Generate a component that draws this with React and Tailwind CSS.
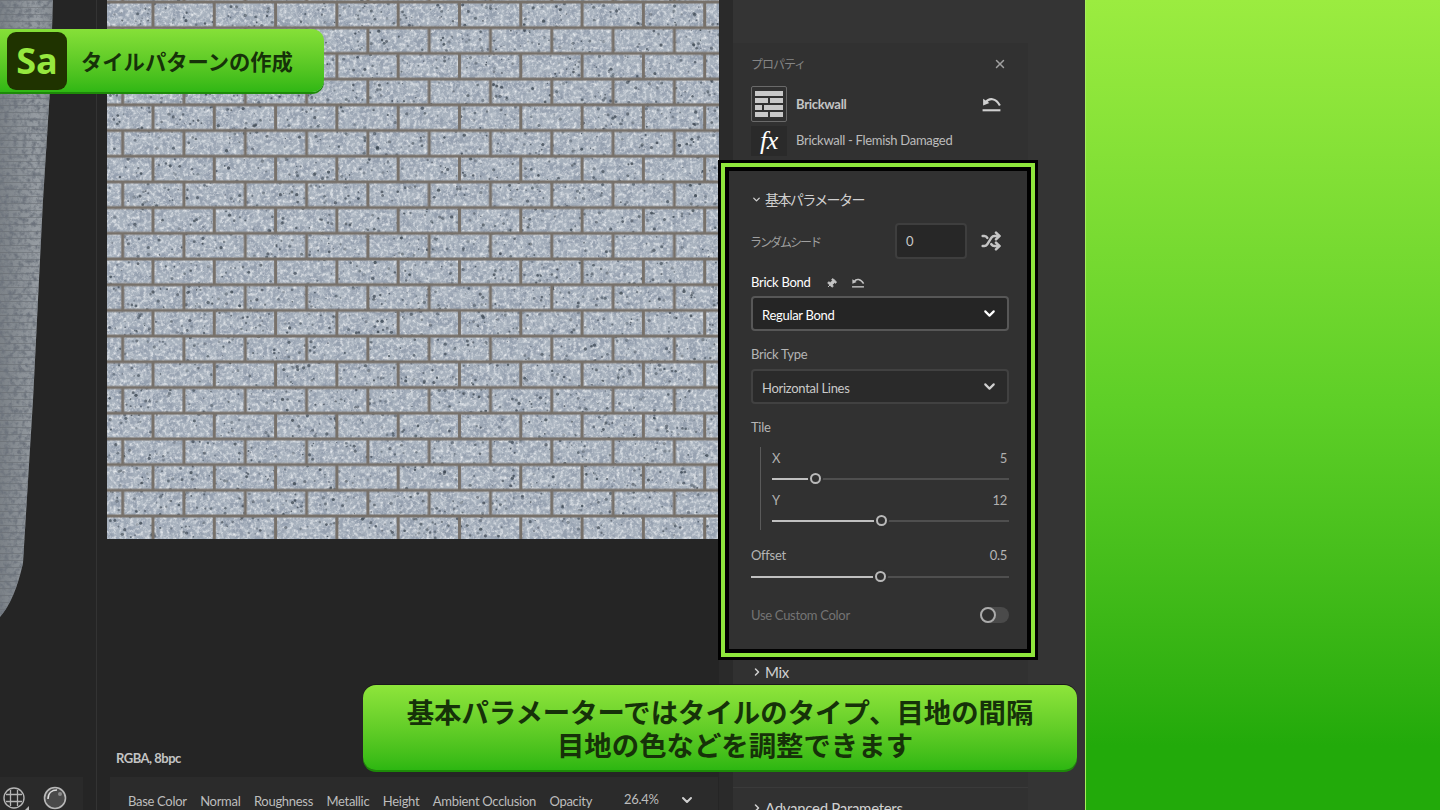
import React from 'react';
import { X, ChevronDown, ChevronRight, Shuffle, Pin } from 'lucide-react';

const jp = "font-['Noto_Sans_CJK_JP','Noto_Sans',sans-serif]";

// speckles on the brick texture, seeded so every run looks the same
const makeSpeckles = () => {
  let seed = 7;
  const rnd = () => {
    seed = (seed * 16807) % 2147483647;
    return seed / 2147483647;
  };
  const dots = [];
  for (let i = 0; i < 3400; i++) {
    dots.push({ x: rnd() * 612, y: rnd() * 539, r: 0.5 + rnd() * 1.2, o: 0.3 + rnd() * 0.5 });
  }
  return dots;
};
const speckles = makeSpeckles();

const BrickTexture = () => (
  <svg width="612" height="539" className="block">
    <defs>
      <filter id="grain" x="0" y="0" width="100%" height="100%">
        <feTurbulence type="fractalNoise" baseFrequency="0.3" numOctaves="3" seed="4" />
        <feColorMatrix type="matrix" values="0 0 0 0 0.88  0 0 0 0 0.9  0 0 0 0 0.92  1.9 0 0 0 -0.82" />
      </filter>
      <filter id="patches" x="0" y="0" width="100%" height="100%">
        <feTurbulence type="fractalNoise" baseFrequency="0.11" numOctaves="3" seed="11" />
        <feColorMatrix type="matrix" values="0 0 0 0 0.3  0 0 0 0 0.35  0 0 0 0 0.43  3.6 0 0 0 -1.45" />
      </filter>
      <filter id="soft" x="0" y="0" width="100%" height="100%">
        <feGaussianBlur stdDeviation="0.7" />
      </filter>
      <pattern id="mortar" patternUnits="userSpaceOnUse" x="0" y="2" width="61.3" height="51.4">
        <rect x="0" y="-1.5" width="61.3" height="3" fill="#77716b" />
        <rect x="0" y="24.2" width="61.3" height="3" fill="#77716b" />
        <rect x="0" y="49.9" width="61.3" height="3" fill="#77716b" />
        <rect x="44.5" y="0" width="3" height="25.7" fill="#77716b" />
        <rect x="14.2" y="25.7" width="3" height="25.7" fill="#77716b" />
      </pattern>
    </defs>
    <g filter="url(#soft)">
      <rect width="612" height="539" fill="#a8b2be" />
      <rect width="612" height="539" filter="url(#patches)" />
      <rect width="612" height="539" filter="url(#grain)" />
      {speckles.map((d, i) => (
        <circle key={i} cx={d.x} cy={d.y} r={d.r} fill="#39444f" opacity={d.o} />
      ))}
      <rect width="612" height="539" fill="url(#mortar)" />
    </g>
  </svg>
);

const ViewportObject = () => (
  <svg width="97" height="640" className="absolute left-0 top-0">
    <defs>
      <filter id="stone" x="0" y="0" width="100%" height="100%">
        <feTurbulence type="fractalNoise" baseFrequency="0.22" numOctaves="3" seed="3" />
        <feColorMatrix type="matrix" values="0 0 0 0 0.15  0 0 0 0 0.17  0 0 0 0 0.2  2.6 0 0 0 -1.05" />
        <feComposite in2="SourceGraphic" operator="in" />
      </filter>
      <linearGradient id="objShade" x1="0" y1="0" x2="1" y2="0">
        <stop offset="0" stopColor="#7b8187" />
        <stop offset="0.7" stopColor="#969ca2" />
        <stop offset="1" stopColor="#868c92" />
      </linearGradient>
      <pattern id="objLines" patternUnits="userSpaceOnUse" width="54" height="7">
        <rect y="0" width="54" height="1" fill="#5f6469" opacity="0.45" />
      </pattern>
    </defs>
    <path d="M0 0 L53 0 L50 90 L43 200 L33 400 L25 530 L23 563 Q15 600 0 617 Z" fill="url(#objShade)" />
    <path d="M0 0 L53 0 L50 90 L43 200 L33 400 L25 530 L23 563 Q15 600 0 617 Z" fill="url(#objLines)" />
    <path d="M0 0 L53 0 L50 90 L43 200 L33 400 L25 530 L23 563 Q15 600 0 617 Z" fill="#000" filter="url(#stone)" />
  </svg>
);

const UndoIcon = ({ size = 20 }) => (
  <svg width={size} height={size} viewBox="0 0 20 20" fill="none" stroke="currentColor" strokeWidth="2">
    <path d="M2 11 L2 4.5 L8 8.5 Z" fill="currentColor" stroke="none" />
    <path d="M4.5 8 C7.5 3.5 14 3.5 18 11" />
    <path d="M1.5 15.5 H18.5" />
  </svg>
);

const BrickIcon = () => (
  <svg width="30" height="28" viewBox="0 0 30 28" fill="#c9c9c9">
    <rect x="1" y="1" width="28" height="5" />
    <rect x="1" y="8" width="13" height="5" />
    <rect x="16" y="8" width="13" height="5" />
    <rect x="1" y="15" width="7" height="5" />
    <rect x="10" y="15" width="19" height="5" />
    <rect x="1" y="22" width="13" height="5" />
    <rect x="16" y="22" width="13" height="5" />
  </svg>
);

const SelectBox = ({ label, strong }) => (
  <div className={`h-[35px] rounded-[4px] border-2 ${strong ? 'bg-[#252525] border-[#575757] text-white' : 'bg-[#2a2a2a] border-[#414141] text-[#c9c9c9]'} flex items-center justify-between pl-[9px] pr-[9px]`}>
    <span className="text-[13px] relative top-[2px]">{label}</span>
    <ChevronDown size={17} strokeWidth={3} className={strong ? 'text-white' : 'text-[#d0d0d0]'} />
  </div>
);

const Slider = ({ width, pct }) => (
  <div className="relative h-[12px]" style={{ width }}>
    <div className="absolute left-0 right-0 top-[5px] h-[2px] bg-[#4f4f4f]" />
    <div className="absolute left-0 top-[5px] h-[2px] bg-[#c0c0c0]" style={{ width: pct - 7 }} />
    <div className="absolute top-[0px] w-[11px] h-[11px] rounded-full border-2 border-[#b9b9b9] bg-[#303030] shadow-[0_0_0_2px_#313131]" style={{ left: pct - 5 }} />
  </div>
);

export default function App() {
  return (
    <div className="w-[1440px] h-[810px] overflow-hidden relative flex bg-[#262626] text-[#c9c9c9] tracking-[-0.3px] font-['Lato','Noto_Sans_CJK_JP',sans-serif]">
      {/* 3D view */}
      <div className="w-[97px] h-full relative shrink-0 bg-[#252525] border-r border-[#333333] flex flex-col justify-end">
        <ViewportObject />
        <div className="w-[83px] h-[33px] bg-[#2a2a2a] relative">
          <svg width="84" height="33" viewBox="0 0 84 33" fill="none" className="absolute left-0 top-0">
            <circle cx="14" cy="21" r="10" stroke="#b5b5b5" strokeWidth="1.4" />
            <path d="M10.5 13 V29 M17.5 13 V29 M6 17.5 H22 M6 24.5 H22" stroke="#b5b5b5" strokeWidth="1.3" />
            <path d="M29 33 L29 29 L25 33 Z" fill="#b5b5b5" />
            <circle cx="55" cy="21" r="10.5" fill="#4a4a4a" stroke="#b8b8b8" strokeWidth="1.6" />
            <path d="M48 22 C48 16 52 13 57 13" stroke="#dcdcdc" strokeWidth="1.6" />
            <circle cx="60" cy="17" r="2" fill="#8c8c8c" />
          </svg>
        </div>
      </div>

      {/* 2D view */}
      <div className="w-[622px] h-full shrink-0 flex flex-col bg-[#252525]">
        <div className="pl-[10px] h-[539px] shrink-0">
          <BrickTexture />
        </div>
        <div className="flex-1 flex items-end pl-[19px] pb-[9px]">
          <span className="text-[13px] font-bold text-[#c4c4c4] tracking-[-0.5px]">RGBA, 8bpc</span>
        </div>
        <div className="ml-[13px] w-[608px] h-[33px] shrink-0 bg-[#2b2b2b] flex items-start pt-[17px] text-[13px] leading-[14px] text-[#bdbdbd]">
          <div className="flex pl-[18px] gap-[13.5px] whitespace-nowrap">
            <span>Base Color</span>
            <span>Normal</span>
            <span>Roughness</span>
            <span>Metallic</span>
            <span>Height</span>
            <span>Ambient Occlusion</span>
            <span>Opacity</span>
          </div>
          <span className="ml-[32px] -mt-[2px]">26.4%</span>
          <ChevronDown size={16} strokeWidth={3} className="ml-[20px] -mt-[2px] text-[#d0d0d0]" />
        </div>
      </div>

      {/* Properties dock */}
      <div className="flex-1 h-full pl-[14px] bg-[#2a2a2a] shrink-0 w-[366px] max-w-[366px]">
        <div className="w-[352px] h-full bg-[#343434] pt-[43px]">
          <div className="w-[295px] h-[117px] pl-[18px] pr-[21px] bg-[#313131]">
            <div className="flex items-center justify-between h-[42px] text-[12px] text-[#858585]">
              <span className={`${jp} tracking-[-1px]`}>プロパティ</span>
              <X size={14} strokeWidth={2.5} className="text-[#a0a0a0]" />
            </div>
            <div className="flex items-center h-[36px] mt-[1px]">
              <div className="w-[36px] h-[36px] rounded-[2px] border border-[#6a6a6a] flex items-center justify-center">
                <BrickIcon />
              </div>
              <span className="ml-[9px] text-[13px] font-bold text-[#c4c4c4] relative top-[1px]">Brickwall</span>
              <span className="ml-auto mr-[5px] text-[#d0d0d0]"><UndoIcon size={21} /></span>
            </div>
            <div className="flex items-center h-[30px] mt-[4px]">
              <div className="w-[36px] h-[30px] bg-[#2a2a2a] flex items-center justify-center font-['Liberation_Serif',serif] italic text-[26px] leading-none text-white">fx</div>
              <span className="ml-[9px] text-[13px] text-[#bcbcbc]">Brickwall - Flemish Damaged</span>
            </div>
          </div>

          {/* highlighted parameter group */}
          <div className="-ml-[15px] w-[320px] h-[500px] border-[3px] border-black relative">
            <div className="w-full h-full border-[4px] border-[#8fe63c]">
              <div className="w-full h-full border-[4px] border-black bg-[#313131] pl-[22px] pr-[18px]">
                <div className={`flex items-center mt-[18px] h-[20px] text-[14px] tracking-[-1.6px] text-[#d0d0d0] ${jp}`}>
                  <ChevronDown size={11} strokeWidth={3} className="mr-[3px]" />
                  基本パラメーター
                </div>
                <div className="flex items-center mt-[14px] h-[36px]">
                  <span className={`w-[144px] text-[12px] tracking-[-2px] text-[#a0a0a0] -ml-[1px] mr-[1px] relative top-[1px] ${jp}`}>ランダムシード</span>
                  <div className="w-[72px] h-[36px] bg-[#272727] border-2 border-[#3e3e3e] rounded-[4px] flex items-center pl-[9px] pt-[2px] text-[13px] text-[#c9c9c9]">0</div>
                  <Shuffle size={20} strokeWidth={3} className="ml-[14px] text-[#c4c4c4]" />
                </div>
                <div className="flex items-center mt-[14px] h-[18px] pt-[2px] text-[13px] text-white">
                  <span>Brick Bond</span>
                  <Pin size={11} fill="currentColor" className="ml-[16px] rotate-45 text-[#c4c4c4]" />
                  <span className="ml-[14px] text-[#c4c4c4]"><UndoIcon size={14} /></span>
                </div>
                <div className="mt-[5px]"><SelectBox label="Regular Bond" strong /></div>
                <div className="mt-[14px] h-[18px] pt-[2px] flex items-center text-[13px] text-[#b5b5b5]">Brick Type</div>
                <div className="mt-[6px]"><SelectBox label="Horizontal Lines" /></div>
                <div className="mt-[14px] h-[18px] pt-[2px] flex items-center text-[13px] text-[#b5b5b5]">Tile</div>
                <div className="mt-[11px] ml-[9px] border-l border-[#5a5a5a] pl-[11px] h-[83px] w-[249px]">
                  <div className="flex justify-between h-[26px] leading-[22px] text-[13px] text-[#b0b0b0] pr-[2px]"><span>X</span><span>5</span></div>
                  <Slider width={237} pct={43} />
                  <div className="flex justify-between h-[26px] mt-[4px] leading-[22px] text-[13px] text-[#b0b0b0] pr-[2px]"><span>Y</span><span>12</span></div>
                  <Slider width={237} pct={109} />
                </div>
                <div className="mt-[14px] flex justify-between h-[22px] pt-[2px] items-center text-[13px] text-[#b5b5b5] pr-[2px]"><span>Offset</span><span>0.5</span></div>
                <div className="mt-[5px]"><Slider width={258} pct={129} /></div>
                <div className="mt-[22px] flex justify-between items-center h-[20px]">
                  <span className="text-[13px] text-[#747474] relative top-[1px]">Use Custom Color</span>
                  <div className="w-[29px] h-[16px] rounded-full bg-[#4a4a4a] relative">
                    <div className="absolute left-0 top-0 w-[16px] h-[16px] rounded-full border-2 border-[#ababab] bg-[#303030]" />
                  </div>
                </div>
              </div>
            </div>
          </div>

          <div className="w-[295px] h-[150px] bg-[#313131] pl-[18px] pt-[1px]">
            <div className="flex items-center h-[22px] text-[15px] text-[#d0d0d0]">
              <ChevronRight size={12} strokeWidth={3} className="mr-[2px]" /> Mix
            </div>
            <div className="flex items-center h-[22px] mt-[69px] text-[15px] text-[#d0d0d0]">
              <ChevronRight size={12} strokeWidth={3} className="mr-[2px]" /> Aging
            </div>
            <div className="-ml-[18px] mt-[13px] border-t border-[#3a3a3a] pl-[18px] pt-[9px] flex items-center text-[15px] text-[#d0d0d0]">
              <ChevronRight size={12} strokeWidth={3} className="mr-[2px]" /> Advanced Parameters
            </div>
          </div>
        </div>
      </div>

      {/* Green background on the right */}
      <div className="w-[355px] h-full absolute right-0 top-0 border-l border-[#a6ee5c] bg-gradient-to-b from-[#9bec40] via-[#5ecf27] via-50% to-[#22aa0a] to-92%" />

      {/* Title badge */}
      <div className={`absolute left-0 top-[29px] w-[324px] h-[63px] rounded-r-[12px] tracking-normal bg-gradient-to-b from-[#86e038] to-[#2fb714] shadow-[0_2px_0_#1d8a08] flex items-center pl-[7px] ${jp}`}>
        <div className="w-[60px] h-[58px] rounded-[9px] bg-[#1f3300] flex items-center justify-center text-[36px] font-bold leading-none text-[#96e83f] font-['Open_Sans',sans-serif]">Sa</div>
        <span className="ml-[14px] text-[21.3px] font-bold text-[#163209] whitespace-nowrap">タイルパターンの作成</span>
      </div>

      {/* Caption */}
      <div className={`absolute left-[363px] top-[685px] w-[714px] h-[85px] rounded-[13px] tracking-normal bg-gradient-to-b from-[#8ee53b] to-[#2cb711] shadow-[0_2px_0_#1d8a08,0_-1px_0_#1a1a1a] flex flex-col items-center justify-center text-[27.4px] leading-[33px] font-bold text-[#163209] ${jp}`}>
        <span className="whitespace-nowrap">基本パラメーターではタイルのタイプ、目地の間隔</span>
        <span className="whitespace-nowrap ml-[30px]">目地の色などを調整できます</span>
      </div>
    </div>
  );
}
